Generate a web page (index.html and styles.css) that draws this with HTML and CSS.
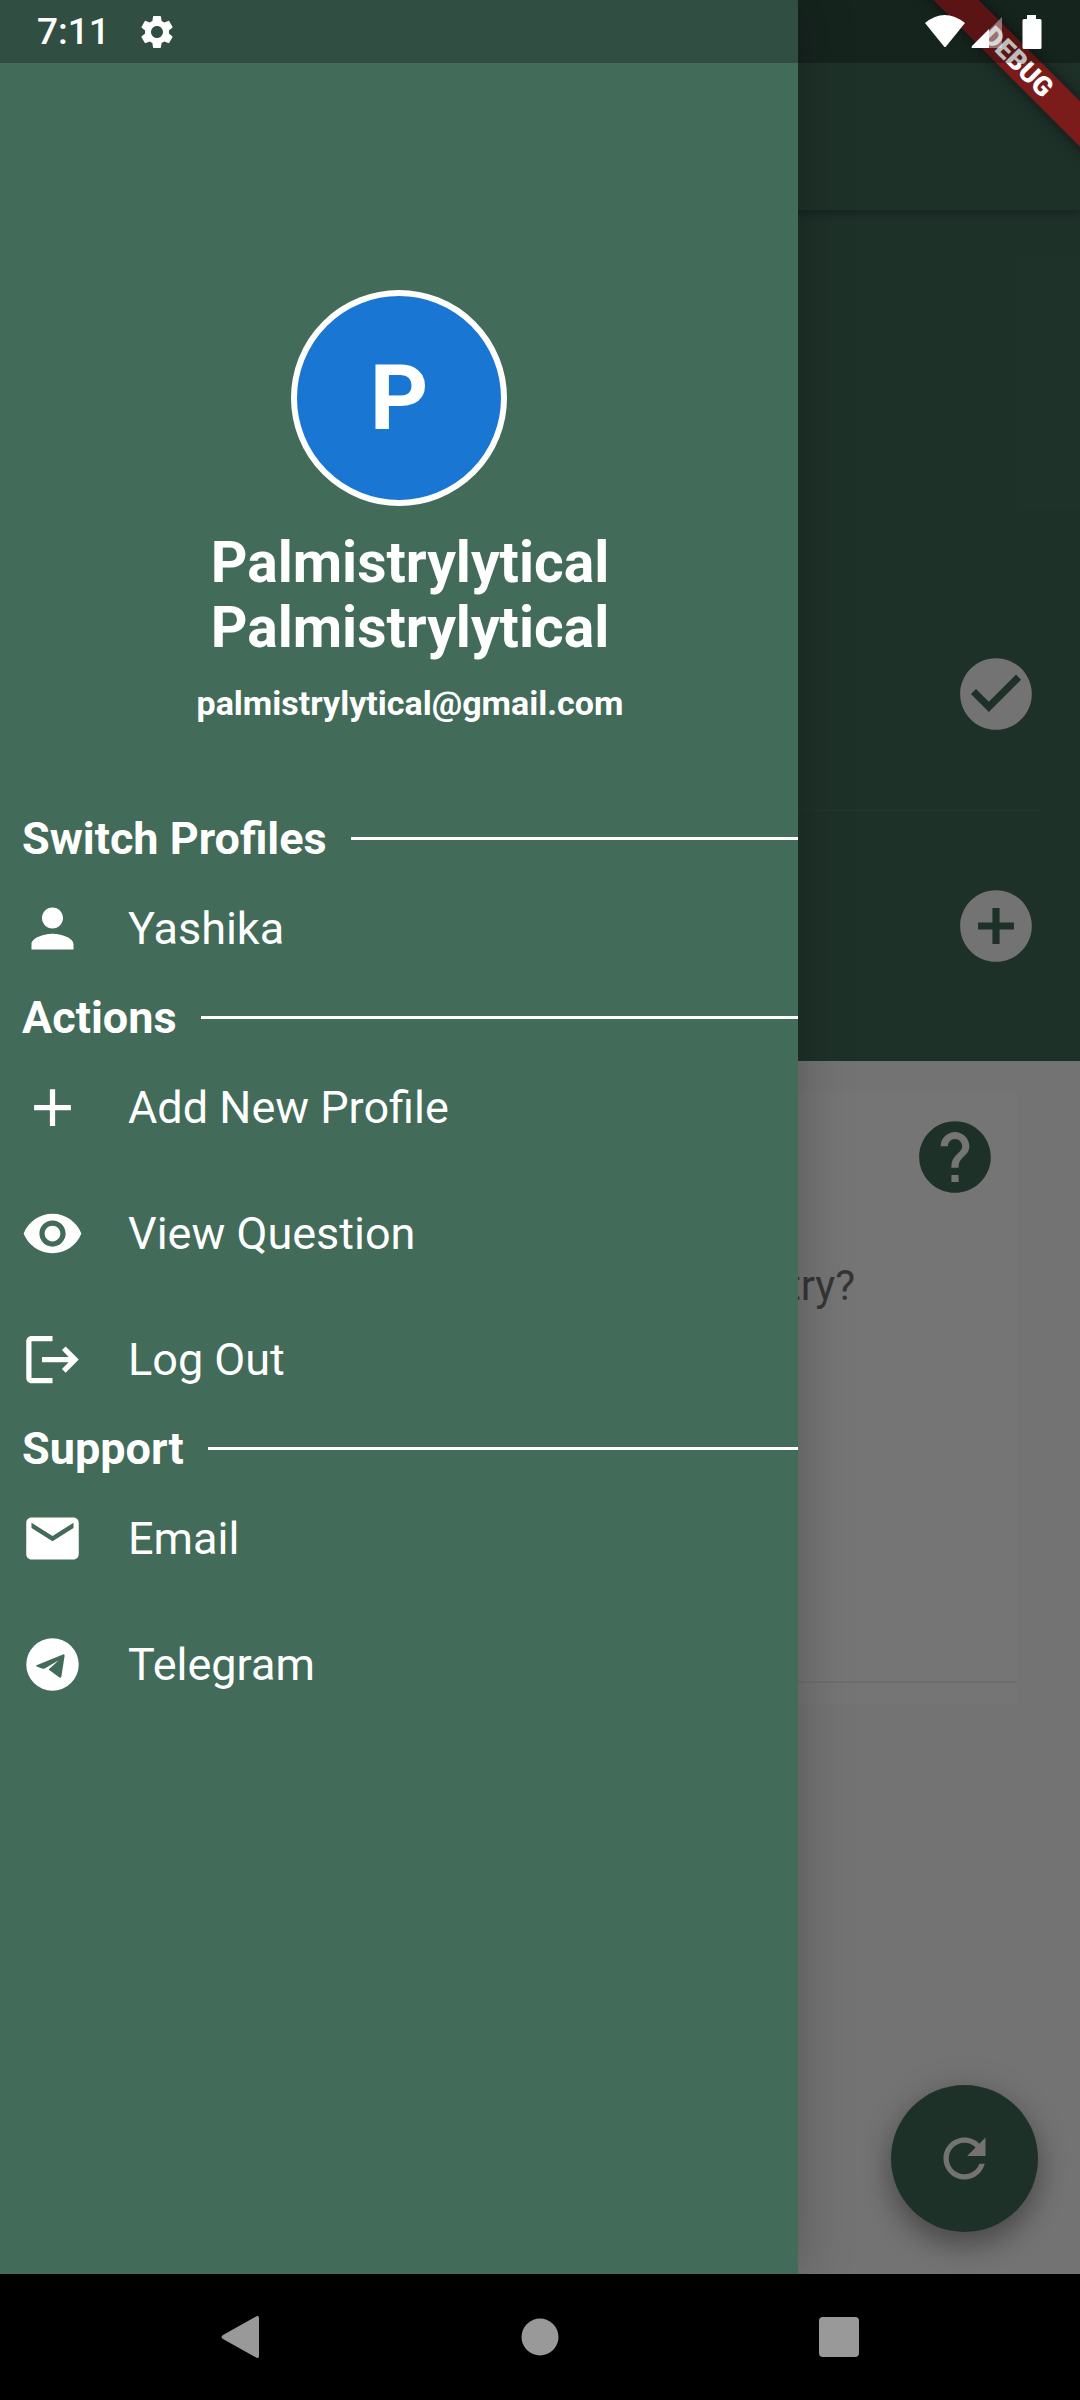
FILE: index.html
```
<!DOCTYPE html>
<html lang="en">

<head>
    <meta charset="UTF-8">
    <meta name="viewport" content="width=device-width, initial-scale=1.0">
    <title>Palmistrylytical</title>
    <link rel="stylesheet" href="styles.css">
</head>

<body>
    <div class="screen">
        <div class="app">
            <!-- Page behind the drawer -->
            <main class="page">
                <div class="app-bar"></div>
                <section class="palms">
                    <div class="palm-row">
                        <svg class="icon-lg" viewBox="0 0 24 24"><path d="M12 2C6.48 2 2 6.48 2 12s4.48 10 10 10 10-4.48 10-10S17.52 2 12 2zm-2 15l-5-5 1.41-1.41L10 14.17l7.59-7.59L19 8l-9 9z"/></svg>
                    </div>
                    <div class="palm-row">
                        <svg class="icon-lg" viewBox="0 0 24 24"><path d="M12 2C6.48 2 2 6.48 2 12s4.48 10 10 10 10-4.48 10-10S17.52 2 12 2zm5 11h-4v4h-2v-4H7v-2h4V7h2v4h4v2z"/></svg>
                    </div>
                </section>
                <section class="card">
                    <div class="card-top">
                        <svg class="icon-lg" viewBox="0 0 24 24"><path d="M12 2C6.48 2 2 6.48 2 12s4.48 10 10 10 10-4.48 10-10S17.52 2 12 2zm1 17h-2v-2h2v2zm2.07-7.75l-.9.92C13.45 12.9 13 13.5 13 15h-2v-.5c0-1.1.45-2.1 1.17-2.83l1.24-1.26c.37-.36.59-.86.59-1.41 0-1.1-.9-2-2-2s-2 .9-2 2H8c0-2.21 1.79-4 4-4s4 1.79 4 4c0 .88-.36 1.68-.93 2.25z"/></svg>
                    </div>
                    <p class="question">try?</p>
                </section>
                <button class="fab" type="button" aria-label="Refresh">
                    <svg class="icon" viewBox="0 0 24 24"><path d="M17.65 6.35C16.2 4.9 14.21 4 12 4c-4.42 0-7.99 3.58-7.99 8s3.57 8 7.99 8c3.73 0 6.84-2.55 7.73-6h-2.08c-.82 2.33-3.04 4-5.65 4-3.31 0-6-2.69-6-6s2.69-6 6-6c1.66 0 3.14.69 4.22 1.78L13 11h7V4l-2.35 2.35z"/></svg>
                </button>
            </main>
            <div class="scrim"></div>

            <!-- Drawer -->
            <aside class="drawer">
                <header class="profile">
                    <div class="avatar">P</div>
                    <h1 class="name">Palmistrylytical Palmistrylytical</h1>
                    <p class="email">palmistrylytical@gmail.com</p>
                </header>

                <nav class="menu">
                    <h2 class="menu-title">Switch Profiles</h2>
                    <button class="menu-item" type="button">
                        <svg class="icon" viewBox="0 0 24 24"><path d="M12 12c2.21 0 4-1.79 4-4s-1.79-4-4-4-4 1.79-4 4 1.79 4 4 4zm0 2c-2.67 0-8 1.34-8 4v2h16v-2c0-2.66-5.33-4-8-4z"/></svg>
                        <span>Yashika</span>
                    </button>

                    <h2 class="menu-title">Actions</h2>
                    <button class="menu-item" type="button">
                        <svg class="icon" viewBox="0 0 24 24"><path d="M19 13h-6v6h-2v-6H5v-2h6V5h2v6h6v2z"/></svg>
                        <span>Add New Profile</span>
                    </button>
                    <button class="menu-item" type="button">
                        <svg class="icon" viewBox="0 0 24 24"><path d="M12 4.5C7 4.5 2.73 7.61 1 12c1.73 4.39 6 7.5 11 7.5s9.27-3.11 11-7.5c-1.73-4.39-6-7.5-11-7.5zM12 17c-2.76 0-5-2.24-5-5s2.24-5 5-5 5 2.24 5 5-2.24 5-5 5zm0-8c-1.66 0-3 1.34-3 3s1.34 3 3 3 3-1.34 3-3-1.34-3-3-3z"/></svg>
                        <span>View Question</span>
                    </button>
                    <button class="menu-item" type="button">
                        <svg class="icon" viewBox="0 0 24 24"><path d="M12 3H4c-1.1 0-2 .9-2 2v14c0 1.1.9 2 2 2h8v-2H4V5h8V3zm5 4l-1.41 1.41L18.17 11H8v2h10.17l-2.58 2.58L17 17l5-5-5-5z"/></svg>
                        <span>Log Out</span>
                    </button>

                    <h2 class="menu-title">Support</h2>
                    <button class="menu-item" type="button">
                        <svg class="icon" viewBox="0 0 24 24"><path d="M20 4H4c-1.1 0-2 .9-2 2v12c0 1.1.9 2 2 2h16c1.1 0 2-.9 2-2V6c0-1.1-.9-2-2-2zm0 4l-8 5-8-5V6l8 5 8-5v2z"/></svg>
                        <span>Email</span>
                    </button>
                    <button class="menu-item" type="button">
                        <svg class="icon" viewBox="0 0 24 24"><path fill-rule="evenodd" d="M12 2a10 10 0 1 0 0 20 10 10 0 0 0 0-20zM5.9 12.3L16 8.15q.7-.2.6.6L15.4 16.5q-.2.9-.9.4L10.5 13.9 14.4 10.4 9 13.5Q8.5 13.7 8 13.5L6 12.8Q5.4 12.6 5.9 12.3z"/></svg>
                        <span>Telegram</span>
                    </button>
                </nav>
            </aside>

            <div class="banner">DEBUG</div>
        </div>

        <div class="status-bar">
            <span class="clock">7:11</span>
            <svg class="gear" viewBox="0 0 24 24"><path d="M19.14 12.94c.04-.3.06-.61.06-.94 0-.32-.02-.64-.07-.94l2.03-1.58c.18-.14.23-.41.12-.61l-1.92-3.32c-.12-.22-.37-.29-.59-.22l-2.39.96c-.5-.38-1.03-.7-1.62-.94l-.36-2.54c-.04-.24-.24-.41-.48-.41h-3.84c-.24 0-.43.17-.47.41l-.36 2.54c-.59.24-1.13.57-1.62.94l-2.39-.96c-.22-.08-.47 0-.59.22L2.74 8.87c-.12.21-.08.47.12.61l2.03 1.58c-.05.3-.09.63-.09.94s.02.64.07.94l-2.03 1.58c-.18.14-.23.41-.12.61l1.92 3.32c.12.22.37.29.59.22l2.39-.96c.5.38 1.03.7 1.62.94l.36 2.54c.05.24.24.41.48.41h3.84c.24 0 .44-.17.47-.41l.36-2.54c.59-.24 1.13-.56 1.62-.94l2.39.96c.22.08.47 0 .59-.22l1.92-3.32c.12-.22.07-.47-.12-.61l-2.01-1.58zM12 15.6c-1.98 0-3.6-1.62-3.6-3.6s1.62-3.6 3.6-3.6 3.6 1.62 3.6 3.6-1.62 3.6-3.6 3.6z"/></svg>
            <div class="status-icons">
                <svg width="42" height="34" viewBox="0 0 42 34"><path d="M1 8Q20.500-8 41 8L22 31.500Q21 32.500 20 31.500Z"/></svg>
                <svg width="32" height="34" viewBox="0 0 32 34"><path opacity=".4" d="M31 2v31H18V15z"/><path d="M18 14v19H1q-1-.5 0-2z"/></svg>
                <svg class="battery" width="20" height="34" viewBox="0 0 20 34"><path d="M5 0h9v4h4q1.500 0 1.500 1.500v27q0 1.500-1.500 1.500H2Q.5 34 .5 32.500v-27Q.5 4 2 4h3z"/></svg>
            </div>
        </div>

        <div class="nav-bar">
            <button class="nav-btn" type="button" aria-label="Back">
                <svg width="42" height="44" viewBox="0 0 42 44"><path d="M37 1Q39 .5 39 3v38q0 2.500-2 2L3 24Q0 22 3 20z"/></svg>
            </button>
            <button class="nav-btn" type="button" aria-label="Home">
                <svg width="38" height="38" viewBox="0 0 38 38"><circle cx="19" cy="19" r="18.500"/></svg>
            </button>
            <button class="nav-btn" type="button" aria-label="Recent apps">
                <svg width="40" height="40" viewBox="0 0 40 40"><rect width="40" height="40" rx="4"/></svg>
            </button>
        </div>
    </div>
</body>

</html>
```

FILE: styles.css
```
* {
    box-sizing: border-box;
}
body {
    margin: 0;
    font-family: Roboto, sans-serif;
    color: #fff;
    background-color: #000;
}
h1, h2, p {
    margin: 0;
}
button {
    border: none;
    padding: 0;
    background: none;
    color: inherit;
    font: inherit;
    cursor: pointer;
}
svg {
    display: block;
    flex: none;
    fill: currentColor;
}
.icon {
    width: 63px;
    height: 63px;
}
.icon-lg {
    width: 86px;
    height: 86px;
}
.screen {
    position: relative;
    display: flex;
    flex-direction: column;
    min-height: 100vh;
}
.app {
    position: relative;
    flex: 1;
    display: flex;
    overflow: hidden;
}

/* page */
.page {
    flex: 1;
    color: #fafafa;
    background-color: #fafafa;
}
.app-bar {
    position: relative;
    height: 210px;
    background-color: #426c5b;
    box-shadow: 0 4px 10px rgba(0, 0, 0, 0.3);
}
.palms {
    padding: 368px 41px 21px 0;
    background-color: #426c5b;
}
.palm-row {
    display: flex;
    align-items: center;
    justify-content: flex-end;
    height: 231px;
}
.palm-row + .palm-row {
    border-top: 2px solid #467060;
}
.card {
    margin: 31px 63px 0;
    height: 612px;
    background-color: #fff;
    border-bottom: 21px solid #fff;
    box-shadow: inset 0 -2px 0 #f0f0f0;
}
.card-top {
    display: flex;
    justify-content: flex-end;
    padding: 22px 19px 0 0;
    color: #426c5b;
}
.question {
    margin-top: 58px;
    padding-right: 162px;
    font-size: 42px;
    line-height: 56px;
    text-align: right;
    color: #757575;
}
.fab {
    position: absolute;
    right: 42px;
    bottom: 42px;
    display: flex;
    align-items: center;
    justify-content: center;
    width: 147px;
    height: 147px;
    border-radius: 50%;
    background-color: #426c5b;
    box-shadow: 0 14px 28px rgba(0, 0, 0, 0.3), 0 2px 36px rgba(0, 0, 0, 0.12);
}
.scrim {
    position: absolute;
    inset: 0;
    background-color: rgba(0, 0, 0, 0.54);
}

/* drawer */
.drawer {
    position: absolute;
    top: 0;
    bottom: 0;
    left: 0;
    width: 798px;
    max-width: 85%;
    padding-top: 290px;
    background-color: #426b5a;
    box-shadow: 0 0 50px rgba(0, 0, 0, 0.25);
}
.profile {
    display: flex;
    flex-direction: column;
    align-items: center;
    margin-bottom: 89px;
    text-align: center;
}
.avatar {
    display: flex;
    align-items: center;
    justify-content: center;
    width: 216px;
    height: 216px;
    border: 6px solid #fff;
    border-radius: 50%;
    background-color: #1976d2;
    font-size: 91px;
    line-height: 108px;
    font-weight: 700;
}
.name {
    width: 480px;
    margin: 24px 0 23px 22px;
    font-size: 57px;
    line-height: 65px;
    font-weight: 700;
}
.email {
    margin-left: 22px;
    font-size: 34px;
    line-height: 40px;
    font-weight: 700;
}
.menu-title {
    display: flex;
    align-items: center;
    gap: 24px;
    padding-left: 22px;
    font-size: 45px;
    line-height: 53px;
    font-weight: 700;
}
.menu-title::after {
    content: "";
    flex: 1;
    height: 3px;
    background-color: #fff;
}
.menu-item {
    display: flex;
    align-items: center;
    gap: 44px;
    width: 100%;
    height: 126px;
    padding-left: 21px;
    font-size: 45px;
    line-height: 53px;
}

/* debug ribbon across the corner */
.banner {
    position: absolute;
    top: 46px;
    right: -88px;
    width: 300px;
    height: 32px;
    background-color: #7b1c1b;
    box-shadow: 0 0 16px rgba(0, 0, 0, 0.5);
    font-size: 27px;
    line-height: 32px;
    font-weight: 900;
    text-align: center;
    transform: rotate(45deg);
}

/* system bars */
.status-bar {
    position: absolute;
    top: 0;
    left: 0;
    right: 0;
    display: flex;
    align-items: center;
    height: 63px;
    padding: 0 38px 0 37px;
    background-color: rgba(0, 0, 0, 0.26);
}
.clock {
    font-size: 37px;
    line-height: 44px;
    font-weight: 500;
}
.gear {
    width: 40px;
    height: 40px;
    margin-left: 27px;
}
.status-icons {
    display: flex;
    align-items: center;
    gap: 5px;
    margin-left: auto;
}
.battery {
    margin-left: 14px;
}
.nav-bar {
    display: flex;
    justify-content: center;
    height: 126px;
    background-color: #000;
}
.nav-btn {
    display: flex;
    align-items: center;
    justify-content: center;
    width: 299px;
    color: #999;
}
```
